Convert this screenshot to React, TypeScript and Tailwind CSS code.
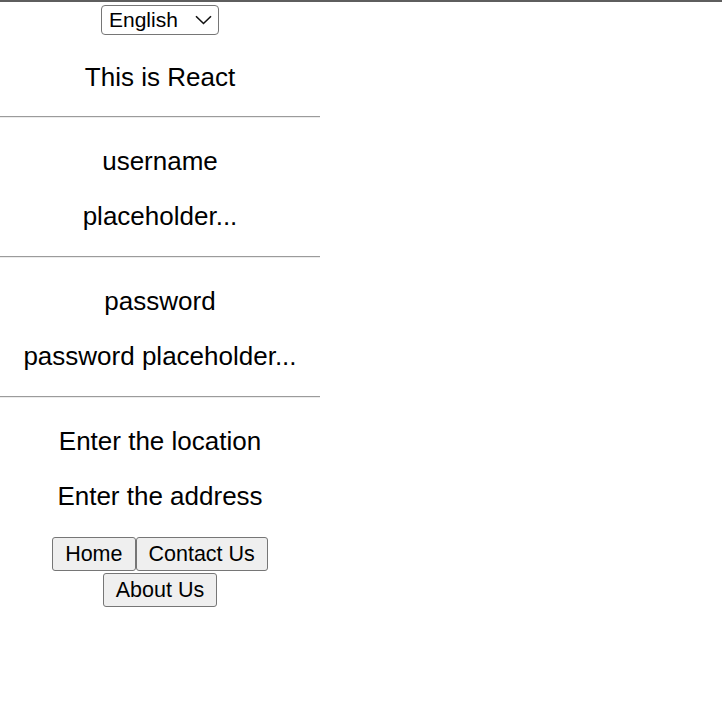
import React from 'react'

function Rule() {
    return <div className="w-[320px] h-[2px] border-t border-t-[#9b9b9b] border-b border-b-[#ececec]"></div>
}

function Line({ children }: { children: React.ReactNode }) {
    return <div className="h-[30px] leading-[30px] text-[26px] text-black">{children}</div>
}

function App() {
    return <>
        <div className="min-h-screen bg-white" style={{ fontFamily: '"Liberation Sans", Arial, sans-serif' }}>
            <div className="w-full h-[2px] bg-[#5e5e5e]"></div>
            <div className="w-[320px] flex flex-col items-center text-center">
                <div className="relative mt-[3px]">
                    <select defaultValue="en" className="appearance-none w-[118px] h-[30px] border border-[#767676] rounded-[4px] bg-white pl-[7px] pr-[28px] text-[21px] leading-[28px] text-black outline-none">
                        <option value="en">English</option>
                        <option value="fr">French</option>
                    </select>
                    <svg className="absolute right-[7px] top-[10px] pointer-events-none" width="17" height="10" viewBox="0 0 17 10" fill="none">
                        <path d="M1 1.2 L8.5 8.5 L16 1.2" stroke="#111" strokeWidth="1.6" />
                    </svg>
                </div>
                <div className="mt-[27px] mb-[24px]"><Line>This is React</Line></div>
                <Rule />
                <div className="pt-[28px] pb-[25px] flex flex-col gap-[25px]">
                    <Line>username</Line>
                    <Line>placeholder...</Line>
                </div>
                <Rule />
                <div className="pt-[28px] pb-[25px] flex flex-col gap-[25px]">
                    <Line>password</Line>
                    <Line>password placeholder...</Line>
                </div>
                <Rule />
                <div className="pt-[28px] flex flex-col gap-[25px]">
                    <Line>Enter the location</Line>
                    <Line>Enter the address</Line>
                </div>
                <div className="mt-[26px] w-[320px] flex flex-wrap justify-center gap-y-[2px]">
                    <button className="h-[34px] px-[12px] border border-[#767676] rounded-[3px] bg-[#efefef] text-[21.5px] text-black">Home</button>
                    <button className="h-[34px] px-[12px] border border-[#767676] rounded-[3px] bg-[#efefef] text-[21.5px] text-black">Contact Us</button>
                    <button className="h-[34px] px-[12px] border border-[#767676] rounded-[3px] bg-[#efefef] text-[21.5px] text-black">About Us</button>
                </div>
            </div>
        </div>
    </>
}

export default App
